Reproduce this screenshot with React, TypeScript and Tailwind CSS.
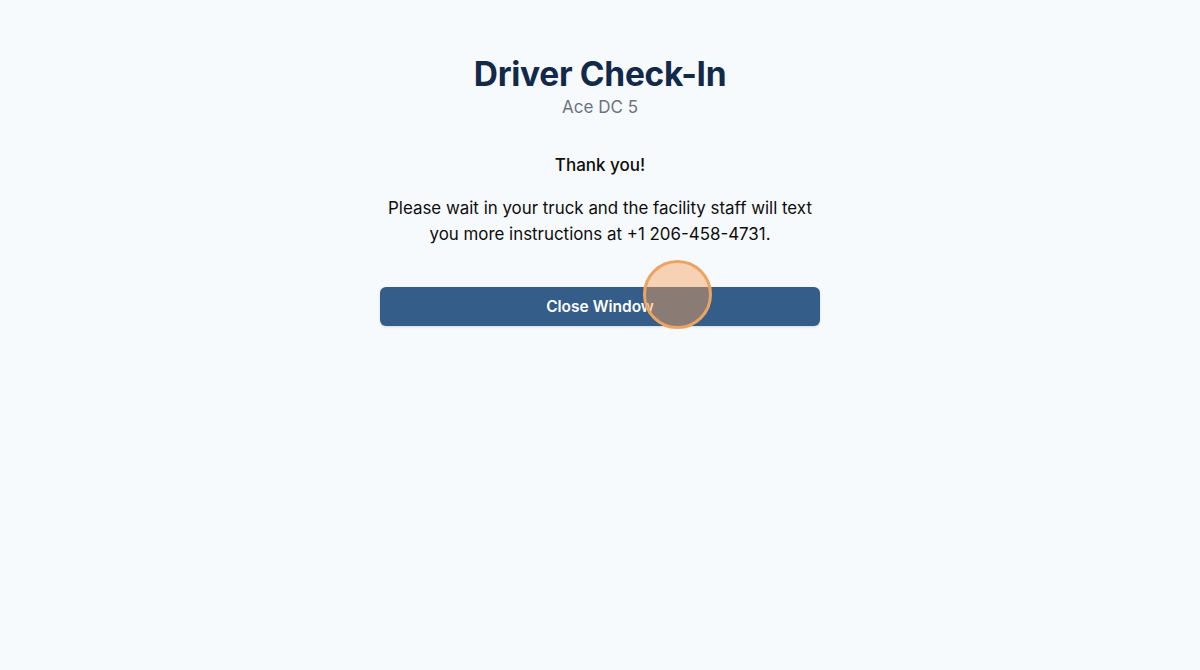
import * as React from 'react'

export default function App() {
  return (
    <div className="relative min-h-[670px] w-full bg-[#f7fafc] font-['Inter',sans-serif]">
      <div className="mx-auto flex w-[440px] flex-col items-center pt-[52px]">
        <h1 className="text-[33.5px] font-bold leading-[44px] tracking-[-0.3px] text-[#12294a]">Driver Check-In</h1>
        <p className="text-[17px] leading-[22px] text-[#6b7280]">Ace DC 5</p>

        <p className="mt-[35px] text-[17px] font-medium leading-[24px] text-[#0d0d0d]">Thank you!</p>
        <p className="mt-[18px] text-center text-[16.9px] leading-[26px] text-[#0d0d0d]">
          Please wait in your truck and the facility staff will text you more instructions at +1 206-458-4731.
        </p>

        <button className="mt-[40px] h-[39px] w-full rounded-[6px] bg-[#345d8a] text-[15.5px] font-semibold text-white shadow-sm">
          Close Window
        </button>
      </div>

      {/* click indicator */}
      <div className="pointer-events-none absolute left-[643px] top-[260px] h-[69px] w-[69px] rounded-full border-[3px] border-[#eaa565] bg-[#f5a05a]/45" />
    </div>
  )
}
